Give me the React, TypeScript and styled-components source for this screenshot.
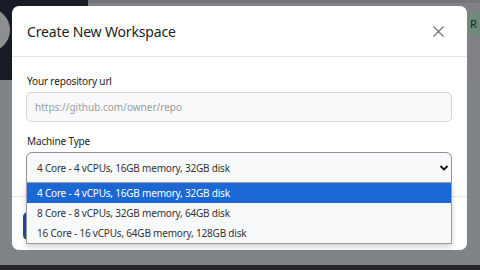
import React from "react";
import styled, { createGlobalStyle } from "styled-components";

const Global = createGlobalStyle`
  html, body { margin: 0; padding: 0; width: 480px; height: 270px; overflow: hidden; }
  body { font-family: "Noto Sans", "Open Sans", sans-serif; background: #818388; }
  * { box-sizing: border-box; }
`;

const Page = styled.div`
  position: relative;
  width: 480px;
  height: 270px;
  display: grid;
  grid-template-rows: 80px 1fr 5px;
  overflow: hidden;
`;

const TopArea = styled.div`
  display: grid;
  grid-template-columns: 88px 1fr 12px;
`;

const DarkBlock = styled.div`
  background: #181c27;
  position: relative;
  overflow: hidden;
`;

const Avatar = styled.div`
  position: absolute;
  left: -34px;
  top: 8px;
  width: 44px;
  height: 44px;
  border-radius: 50%;
  background: #8c8e92;
`;

const GrayTop = styled.div`
  background: #808287;
  border-top: 3px solid #75767a;
`;

const RightTop = styled.div`
  background: #808287;
  border-top: 3px solid #75767a;
  padding-top: 9px;
`;

const GreenBtn = styled.div`
  height: 24px;
  background: #71897a;
  color: #1e2a22;
  font-size: 11px;
  line-height: 24px;
  padding-left: 2px;
  border-radius: 3px 0 0 3px;
`;

const Main = styled.div`
  background: #808388;
`;

const BottomBar = styled.div`
  background: #24262a;
`;

const Modal = styled.div`
  position: absolute;
  left: 12px;
  top: 6px;
  width: 455px;
  height: 244px;
  background: #fff;
  border-radius: 7px;
  display: flex;
  flex-direction: column;
`;

const Header = styled.div`
  height: 51px;
  display: flex;
  align-items: center;
  justify-content: space-between;
  padding: 0 23px 0 15px;
  border-bottom: 1px solid #e3e5e8;
`;

const Title = styled.h1`
  margin: 0;
  font-size: 14px;
  letter-spacing: -0.15px;
  font-weight: 400;
  color: #222;
`;

const CloseBtn = styled.button`
  border: none;
  background: none;
  padding: 0;
  width: 12px;
  height: 12px;
  display: flex;
  align-items: center;
  justify-content: center;
`;

const Body = styled.div`
  height: 140px;
  padding: 16px 15px 0 14px;
  display: flex;
  flex-direction: column;
  border-bottom: 1px solid #e3e5e8;
`;

const Label = styled.label`
  font-size: 10px;
  letter-spacing: -0.15px;
  color: #222;
  padding-left: 1px;
  line-height: 16px;
  margin-bottom: 3px;
`;

const Input = styled.div`
  height: 30px;
  border: 1px solid #d3d5d8;
  border-radius: 5px;
  background: #f8f9fb;
  color: #9a9ca0;
  font-size: 10px;
  display: flex;
  align-items: center;
  padding-left: 8px;
  margin-bottom: 11px;
`;

const SelectWrap = styled.div`
  position: relative;
`;

const Select = styled.div`
  height: 31px;
  border: 1px solid #8e9196;
  border-radius: 6px 6px 0 0;
  background: #f8f9fb;
  color: #333;
  font-size: 10px;
  letter-spacing: -0.2px;
  display: flex;
  align-items: center;
  justify-content: space-between;
  padding: 0 2px 0 10px;
`;

const List = styled.div`
  position: absolute;
  left: 0;
  right: 0;
  top: 30px;
  background: #f8f9fb;
  border: 1px solid #9a9da2;
  box-shadow: 0 3px 6px rgba(0, 0, 0, 0.18);
  z-index: 2;
`;

const Option = styled.div<{ $active?: boolean }>`
  height: 20px;
  line-height: 20px;
  font-size: 10px;
  letter-spacing: -0.2px;
  padding-left: 10px;
  color: ${(p) => (p.$active ? "#fff" : "#333")};
  background: ${(p) => (p.$active ? "#1b67d3" : "transparent")};
`;

const Footer = styled.div`
  flex: 1;
  padding: 15px 0 0 11px;
`;

const PrimaryBtn = styled.div`
  width: 90px;
  height: 28px;
  background: #1d4fa6;
  border-radius: 5px;
`;

const options = [
  "4 Core - 4 vCPUs, 16GB memory, 32GB disk",
  "8 Core - 8 vCPUs, 32GB memory, 64GB disk",
  "16 Core - 16 vCPUs, 64GB memory, 128GB disk",
];

export default function App() {
  return (
    <>
      <Global />
      <Page>
        <TopArea>
          <DarkBlock>
            <Avatar />
          </DarkBlock>
          <GrayTop />
          <RightTop>
            <GreenBtn>R</GreenBtn>
          </RightTop>
        </TopArea>
        <Main />
        <BottomBar />
        <Modal>
          <Header>
            <Title>Create New Workspace</Title>
            <CloseBtn aria-label="Close">
              <svg width="11" height="11" viewBox="0 0 11 11">
                <path d="M0.5 0.5 L10.5 10.5 M10.5 0.5 L0.5 10.5" stroke="#6d6f73" strokeWidth="1.1" fill="none" />
              </svg>
            </CloseBtn>
          </Header>
          <Body>
            <Label>Your repository url</Label>
            <Input>https://github.com/owner/repo</Input>
            <Label>Machine Type</Label>
            <SelectWrap>
              <Select>
                <span>{options[0]}</span>
                <svg width="10" height="8" viewBox="0 0 10 8">
                  <path d="M1.5 2 L5 5.5 L8.5 2" stroke="#111" strokeWidth="1.8" fill="none" />
                </svg>
              </Select>
              <List>
                {options.map((o, i) => (
                  <Option key={o} $active={i === 0}>
                    {o}
                  </Option>
                ))}
              </List>
            </SelectWrap>
          </Body>
          <Footer>
            <PrimaryBtn />
          </Footer>
        </Modal>
      </Page>
    </>
  );
}
